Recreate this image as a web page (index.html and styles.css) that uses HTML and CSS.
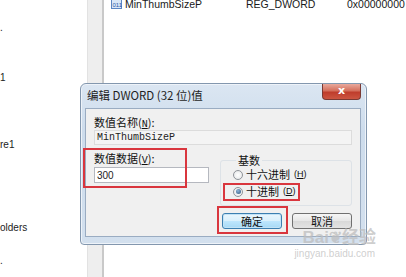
FILE: index.html
```html
<!DOCTYPE html>
<html lang="zh-cn">
<head>
    <meta charset="UTF-8">
    <title>编辑 DWORD (32 位)值</title>
    <link rel="stylesheet" href="styles.css">
</head>
<body>
<div class="screen">
    <!-- 左侧树 -->
    <ul class="tree">
        <li></li>
        <li>.</li>
        <li></li>
        <li></li>
        <li>1</li>
        <li></li>
        <li></li>
        <li></li>
        <li>re1</li>
        <li></li>
        <li></li>
        <li></li>
        <li></li>
        <li>olders</li>
        <li></li>
        <li>.</li>
    </ul>
    <div class="splitter"></div>
    <!-- 右侧列表 -->
    <div class="list">
        <div class="row">
            <span class="ico">
                <svg width="11" height="10" viewBox="0 0 11 10"><rect x="0.5" y="0.5" width="10" height="9" fill="#d8e6f7" stroke="#5b86c4"/><text x="1.5" y="8" font-size="6" font-family="Liberation Sans" fill="#2d5ca8">011</text></svg>
            </span>
            <span class="cName">MinThumbSizeP</span>
            <span class="cType">REG_DWORD</span>
            <span class="cData">0x00000000</span>
        </div>
    </div>
</div>

<div class="dialog">
    <div class="titleBar">
        <span class="title">编辑 DWORD (32 位)值</span>
        <a href="javascript:;" class="closeBtn">x</a>
    </div>
    <div class="client">
        <p class="lbl">数值名称(<u>N</u>):</p>
        <div class="nameField">MinThumbSizeP</div>
        <div class="mid">
            <div class="dataCol">
                <p class="lbl">数值数据(<u>V</u>):</p>
                <input type="text" class="dataInput" value="300" />
            </div>
            <fieldset class="base">
                <legend>基数</legend>
                <label class="radio"><span class="dot"></span>十六进制<i>(<u>H</u>)</i></label>
                <label class="radio"><span class="dot on"></span>十进制<i>(<u>D</u>)</i></label>
            </fieldset>
        </div>
        <div class="btns">
            <a href="javascript:;" class="btn ok">确定</a>
            <a href="javascript:;" class="btn">取消</a>
        </div>
    </div>
    <!-- 红框标注 -->
    <span class="mark m1"></span>
    <span class="mark m2"></span>
    <span class="mark m3"></span>
</div>

<div class="wm">
    <p class="wmLogo">Bai<span class="paw">&#x2766;</span>经验</p>
    <p class="wmUrl">jingyan.baidu.com</p>
</div>
</body>
</html>
```

FILE: styles.css
```css
*{ margin: 0; padding: 0; list-style: none; box-sizing: border-box; }
a{ text-decoration: none; color: inherit; }
i{ font-style: normal; }
body{ width: 406px; height: 277px; overflow: hidden; background: #fff; color: #000; font: 11px/1.2 "Noto Sans CJK SC", sans-serif; position: relative; }

.screen{ display: flex; height: 277px; }
.tree{ width: 87px; padding-top: 3px; font: 10px/16.7px "Liberation Sans", sans-serif; color: #222; }
.tree li{ height: 16.7px; white-space: nowrap; overflow: hidden; }
.splitter{ width: 17px; background: #eeeeee; border-left: 1px solid #e2e2e2; border-right: 2px solid #c9c9c9; }
.list{ flex: 1; padding-left: 7px; }
.list .row{ display: flex; align-items: center; height: 14px; margin-top: -3px; font: 10.5px/14px "Liberation Sans", sans-serif; color: #1a1a1a; white-space: nowrap; }
.list .ico{ width: 14px; display: flex; }
.list .cName{ width: 121px; }
.list .cType{ width: 101px; }

.dialog{ position: absolute; left: 80px; top: 83px; width: 287px; height: 162px; display: flex; flex-direction: column; padding: 0 5px 7px 4px; background: linear-gradient(#dbe6f2, #cddcec 30%, #d3e0ee); border: 1px solid #8397ae; border-radius: 6px 6px 4px 4px; box-shadow: inset 0 0 0 1px #eef3f9; }
.titleBar{ height: 24px; display: flex; justify-content: space-between; align-items: flex-start; }
.title{ padding: 5px 0 0 2px; font-size: 11.5px; color: #1e1e1e; }
.closeBtn{ width: 39px; height: 16px; background: linear-gradient(#e9a99c, #d46f5c 45%, #bf3d2c 55%, #cc5541); border: 1px solid #7a3a34; border-top: 0; border-radius: 0 0 4px 4px; color: #fff; font: bold 11px/14px "DejaVu Sans", sans-serif; text-align: center; }
.client{ flex: 1; background: #f0f0f0; border: 1px solid #9aacc2; padding: 7px 8px 0 8px; }

.lbl{ height: 13px; font-size: 11px; line-height: 13px; color: #111; }
.lbl u{ text-decoration: underline; font-family: "Liberation Mono", monospace; font-size: 10px; }
.nameField{ margin-top: 1px; height: 15px; border: 1px solid #dcdcdc; background: #f4f4f4; padding-left: 2px; font: 10px/13px "Liberation Mono", monospace; color: #222; }

.mid{ display: flex; gap: 11px; margin-top: 5px; }
.dataCol{ width: 115px; padding-top: 2px; }
.dataInput{ display: block; width: 115px; height: 16px; margin-top: 2px; border: 1px solid #b5b8bf; background: #fff; padding: 0 2px; font: 10px/14px "Liberation Sans", sans-serif; color: #222; outline: none; }
.base{ flex: 1; height: 52px; border: 1px solid #dde2e7; border-radius: 3px; padding: 0 0 0 12px; margin-top: 4px; }
.base legend{ padding: 0 2px; margin-left: 3px; font-size: 11px; line-height: 12px; color: #111; }
.radio{ display: flex; align-items: center; gap: 3px; height: 17px; font-size: 11px; color: #111; }
.radio i{ font: 9px/1 "Liberation Sans", sans-serif; margin-left: 1px; }
.radio u{ text-decoration: underline; }
.dot{ width: 10px; height: 10px; border-radius: 50%; border: 1px solid #8f9399; background: radial-gradient(#ffffff, #e2e4e6); display: flex; align-items: center; justify-content: center; }
.dot.on::after{ content: ""; width: 5px; height: 5px; border-radius: 50%; background: radial-gradient(circle at 40% 35%, #8db4d8, #2e557c); }

.btns{ display: flex; justify-content: flex-end; gap: 10px; margin-top: 7px; }
.btn{ width: 60px; height: 16px; border: 1px solid #707070; border-radius: 3px; background: linear-gradient(#f6f6f6, #e6e6e6 50%, #d8d8d8 51%, #e3e3e3); text-align: center; font-size: 11px; line-height: 14px; color: #111; }
.btn.ok{ border-color: #3c7fb1; background: linear-gradient(#eaf6fd, #d9f0fc 50%, #bee6fd 51%, #a7d9f5); box-shadow: inset 0 0 0 1px #c3e3f6; }

.mark{ position: absolute; border: 2px solid #d9363e; }
.m1{ left: 2px; top: 64px; width: 104px; height: 40px; }
.m2{ left: 142px; top: 99px; width: 77px; height: 18px; }
.m3{ left: 136px; top: 122px; width: 71px; height: 28px; }

.wm{ position: absolute; left: 262px; top: 227px; width: 114px; color: rgba(190, 190, 190, 0.75); text-align: right; }
.wmLogo{ font: bold 17px/21px "Liberation Sans", "Noto Sans CJK SC", sans-serif; }
.wmLogo .paw{ font-size: 16px; }
.wmUrl{ font: 10px/12px "Liberation Sans", sans-serif; padding-right: 1px; }
```
